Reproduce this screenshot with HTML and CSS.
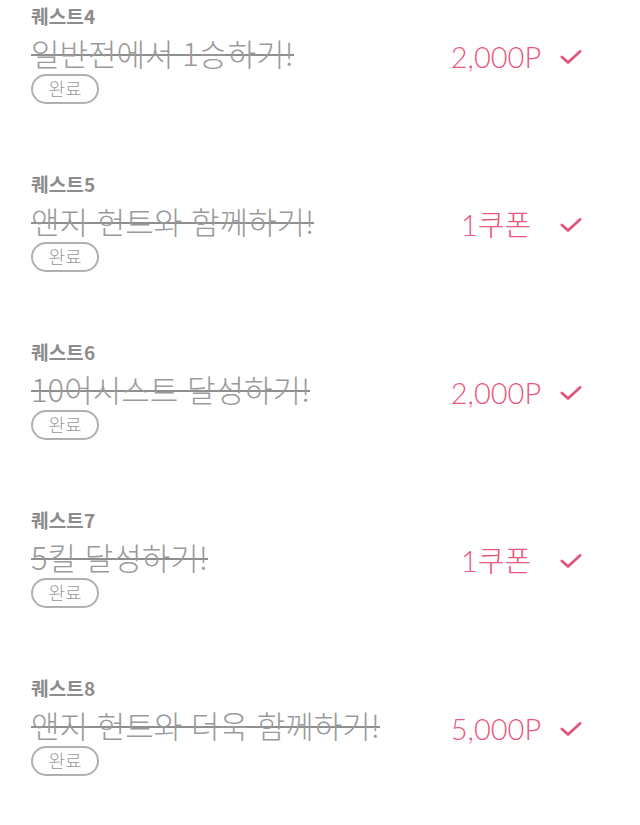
FILE: index.html
```html
<!DOCTYPE html>
<html lang="ko">
<head>
  <meta charset="UTF-8" />
  <meta name="viewport" content="width=device-width, initial-scale=1.0"/>
  <title>퀘스트</title>
  <link rel="stylesheet" href="styles.css">
</head>
<body>
  <ul class="quest-list">
    <li class="quest">
      <div class="quest-info">
        <div class="quest-label">퀘스트4</div>
        <div class="quest-title"><span>일반전에서 1승하기!</span></div>
        <span class="quest-badge">완료</span>
      </div>
      <div class="quest-reward">2,000P</div>
      <svg class="quest-check" viewBox="0 0 22 16"><path d="M2 8 L8 13.5 L20 2.5"/></svg>
    </li>
    <li class="quest">
      <div class="quest-info">
        <div class="quest-label">퀘스트5</div>
        <div class="quest-title"><span>앤지 헌트와 함께하기!</span></div>
        <span class="quest-badge">완료</span>
      </div>
      <div class="quest-reward">1쿠폰</div>
      <svg class="quest-check" viewBox="0 0 22 16"><path d="M2 8 L8 13.5 L20 2.5"/></svg>
    </li>
    <li class="quest">
      <div class="quest-info">
        <div class="quest-label">퀘스트6</div>
        <div class="quest-title"><span>10어시스트 달성하기!</span></div>
        <span class="quest-badge">완료</span>
      </div>
      <div class="quest-reward">2,000P</div>
      <svg class="quest-check" viewBox="0 0 22 16"><path d="M2 8 L8 13.5 L20 2.5"/></svg>
    </li>
    <li class="quest">
      <div class="quest-info">
        <div class="quest-label">퀘스트7</div>
        <div class="quest-title"><span>5킬 달성하기!</span></div>
        <span class="quest-badge">완료</span>
      </div>
      <div class="quest-reward">1쿠폰</div>
      <svg class="quest-check" viewBox="0 0 22 16"><path d="M2 8 L8 13.5 L20 2.5"/></svg>
    </li>
    <li class="quest">
      <div class="quest-info">
        <div class="quest-label">퀘스트8</div>
        <div class="quest-title"><span>앤지 헌트와 더욱 함께하기!</span></div>
        <span class="quest-badge">완료</span>
      </div>
      <div class="quest-reward">5,000P</div>
      <svg class="quest-check" viewBox="0 0 22 16"><path d="M2 8 L8 13.5 L20 2.5"/></svg>
    </li>
  </ul>
</body>
</html>
```

FILE: styles.css
```css
* {
  box-sizing: border-box;
}

body {
  margin: 0;
  background: #ffffff;
  font-family: 'Noto Sans CJK KR', 'Noto Sans', sans-serif;
}

.quest-list {
  list-style: none;
  margin: 0;
  padding: 2px 0 0 31px;
}

.quest {
  display: flex;
  align-items: flex-start;
  height: 168px;
}

.quest-info {
  flex: 1;
  display: flex;
  flex-direction: column;
  align-items: flex-start;
}

.quest-label {
  font-size: 19px;
  line-height: 28px;
  font-weight: 700;
  letter-spacing: 0.2px;
  color: #8c8c8c;
}

.quest-title {
  font-size: 31px;
  line-height: 45px;
  font-weight: 300;
  color: #9a9a9a;
}

/* strike line drawn through the middle of the glyphs */
.quest-title span {
  background: linear-gradient(#8f8f8f, #8f8f8f) 0 55% / 100% 2px no-repeat;
}

.quest-badge {
  margin-top: -1px;
  width: 68px;
  height: 30px;
  border: 2px solid #b0b0b0;
  border-radius: 15px;
  font-size: 18px;
  line-height: 25px;
  font-weight: 300;
  text-align: center;
  color: #999999;
}

.quest-reward {
  width: 100px;
  margin-top: 38px;
  text-align: center;
  font-family: 'Lato', 'Noto Sans CJK KR', sans-serif;
  font-size: 29px;
  line-height: 34px;
  font-weight: 300;
  color: #e8577d;
}

.quest-check {
  width: 22px;
  height: 16px;
  margin: 47px 58px 0 14px;
  fill: none;
  stroke: #e05a80;
  stroke-width: 3;
  stroke-linecap: round;
  stroke-linejoin: round;
}
```
